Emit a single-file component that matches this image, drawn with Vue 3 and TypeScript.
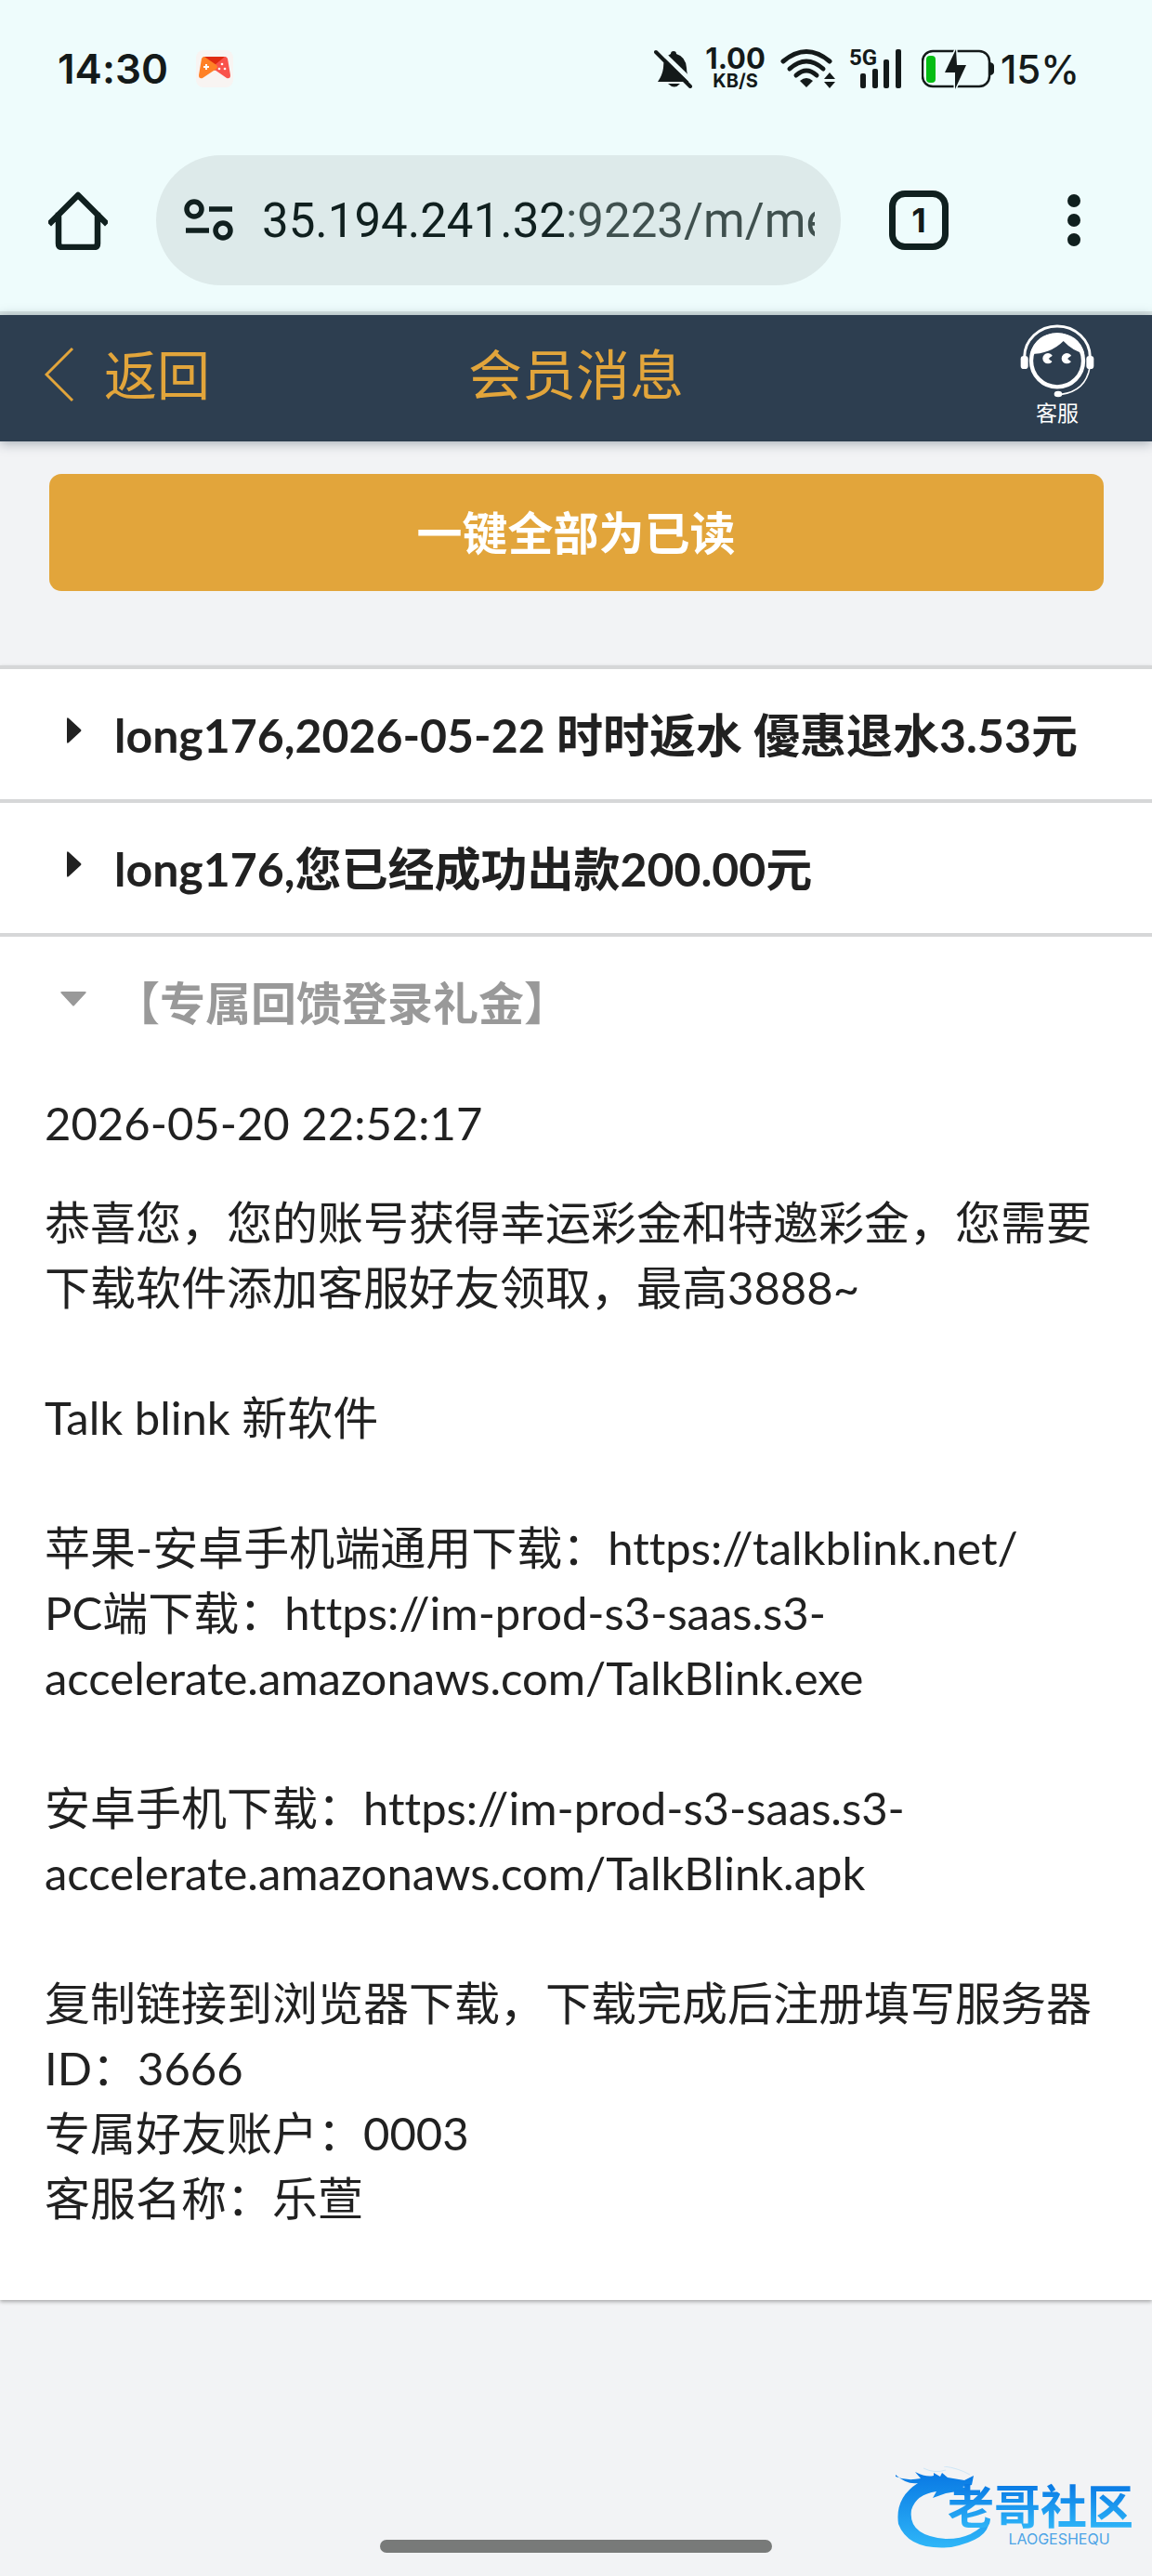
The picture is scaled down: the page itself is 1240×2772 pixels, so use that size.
<script setup lang="ts">
import { ref } from 'vue'

interface Message {
  id: number
  title: string
  read: boolean
  time?: string
  body?: string
}

const address = ref('35.194.241.32:9223/m/me')

const messages = ref<Message[]>([
  { id: 1, title: 'long176,2026-05-22 时时返水 優惠退水3.53元', read: false },
  { id: 2, title: 'long176,您已经成功出款200.00元', read: false },
  {
    id: 3,
    title: '【专属回馈登录礼金】',
    read: true,
    time: '2026-05-20 22:52:17',
    body: [
      '恭喜您，您的账号获得幸运彩金和特邀彩金，您需要下载软件添加客服好友领取，最高3888~',
      '',
      'Talk blink 新软件',
      '',
      '苹果-安卓手机端通用下载：https://talkblink.net/',
      'PC端下载：https://im-prod-s3-saas.s3-accelerate.amazonaws.com/TalkBlink.exe',
      '',
      '安卓手机下载：https://im-prod-s3-saas.s3-accelerate.amazonaws.com/TalkBlink.apk',
      '',
      '复制链接到浏览器下载，下载完成后注册填写服务器ID：3666',
      '专属好友账户：0003',
      '客服名称：乐萱',
    ].join('\n'),
  },
])

const openId = ref<number | null>(3)

function toggle(message: Message) {
  openId.value = openId.value === message.id ? null : message.id
  message.read = true
}

function markAllRead() {
  messages.value.forEach((message) => (message.read = true))
}
</script>

<template>
  <div class="screen">
    <div class="chrome">
      <div class="status">
        <span class="clock">14:30</span>
        <svg class="game" viewBox="0 0 40 40" aria-hidden="true">
          <rect width="40" height="40" rx="8" fill="#f8f4f2" />
          <path d="M7 9q1-2 3-2h20q2 0 3 2L20 22z" fill="#e02a10" />
          <path d="M34 9q-1-2-3-2l-11 9v5l13 9q4 1 4-3z" fill="#f9534c" />
          <path d="M6 9q1-2 3-2l13 9q2 2 0 4L7 30q-4 1-4-3z" fill="#ff8126" />
          <path d="M11 15v6M8 18h6" stroke="#fff" stroke-width="2" />
          <g fill="#fff"><circle cx="28" cy="15" r="1.3" /><circle cx="25" cy="20" r="1.3" /><circle cx="31" cy="20" r="1.3" /></g>
        </svg>
        <div class="indicators">
          <svg class="bell" viewBox="0 0 42 42" aria-hidden="true">
            <path d="M18 5q0-3 3-3t3 3q10 3 11 15 0 8 5 15H4q5-7 6-15 0-12 8-15z" fill="#141a1a" />
            <path d="M15 37h13q-6 7-13 0z" fill="#141a1a" />
            <path d="M4-1L42 36" stroke="#eefcfc" stroke-width="5" />
            <path d="M2 3L39 40" stroke="#141a1a" stroke-width="4" stroke-linecap="round" />
          </svg>
          <div class="speed"><span class="rate">1.00</span><span class="unit">KB/S</span></div>
          <svg class="wifi" viewBox="0 0 60 44" aria-hidden="true">
            <g fill="none" stroke="#141a1a" stroke-width="5" stroke-linecap="round">
              <path d="M4 14Q29-7 54 14" /><path d="M11 22Q29 6 47 22" /><path d="M18 29Q29 19 40 29" />
            </g>
            <path d="M22 35q7-6 14 0l-7 7z" fill="#141a1a" />
            <path d="M48 33l6-7 6 7zM48 36h12l-6 7z" fill="#141a1a" />
          </svg>
          <div class="cell">
            <span class="gen">5G</span>
            <svg class="bars" viewBox="0 0 46 44" aria-hidden="true">
              <g fill="#141a1a">
                <rect y="27" width="6" height="16" rx="2" /><rect x="13" y="22" width="6" height="21" rx="2" />
                <rect x="25" y="12" width="6" height="31" rx="2" /><rect x="38" y="1" width="6" height="42" rx="2" />
              </g>
            </svg>
          </div>
          <svg class="battery" viewBox="0 0 80 44" aria-hidden="true">
            <rect x="1" y="3" width="72" height="38" rx="11" fill="none" stroke="#141a1a" stroke-width="2.500" />
            <path d="M74 15q4 1 4 4v6q0 3-4 4z" fill="#141a1a" />
            <rect x="5" y="8" width="10" height="29" rx="4" fill="#06bd14" />
            <path d="M37 1L25 26h11v18l12-26H38z" fill="#141a1a" stroke="#eefcfc" stroke-width="3" paint-order="stroke" />
          </svg>
          <span class="percent">15%</span>
        </div>
      </div>

      <div class="toolbar">
        <button class="icon-button" type="button" aria-label="主页">
          <svg class="home" viewBox="0 0 64 64" aria-hidden="true">
            <path d="M11 27v30q0 4 4 4h34q4 0 4-4V27M3 34L32 5l29 29" fill="none" stroke="#10201f" stroke-width="6.500" stroke-linejoin="round" stroke-linecap="square" />
          </svg>
        </button>
        <label class="omnibox">
          <svg class="tune" viewBox="0 0 54 46" aria-hidden="true">
            <g fill="none" stroke="#10201f" stroke-width="5.500">
              <circle cx="11" cy="11" r="8" /><circle cx="42" cy="34" r="8" /><path d="M27 11h25M2 34h25" />
            </g>
          </svg>
          <input v-model="address" class="address" type="text" aria-label="网址" />
        </label>
        <button class="tabs" type="button" aria-label="标签页">1</button>
        <button class="icon-button" type="button" aria-label="更多">
          <svg class="more" viewBox="0 0 14 58" aria-hidden="true">
            <g fill="#10201f"><circle cx="7" cy="8" r="7" /><circle cx="7" cy="29" r="7" /><circle cx="7" cy="50" r="7" /></g>
          </svg>
        </button>
      </div>
    </div>

    <header class="header">
      <a class="back" href="#">
        <svg class="chevron" viewBox="0 0 32 60" aria-hidden="true">
          <path d="M30 2L2 30l28 28" fill="none" stroke="#e2a53b" stroke-width="3" />
        </svg>
        返回
      </a>
      <h1 class="title">会员消息</h1>
      <a class="support" href="#">
        <svg class="agent" viewBox="56 30 240 240" aria-hidden="true">
          <g fill="none" stroke="#fff">
            <ellipse cx="176" cy="148" rx="84" ry="84" stroke-width="13" />
            <path d="M70 136a106 100 0 0 1 212 0" stroke-width="9" />
            <path d="M281 170q-14 76-92 86" stroke-width="5" />
          </g>
          <path d="M88 126q18-66 88-68 70 2 88 66-36-6-68-40-42 42-108 42z" fill="#fff" />
          <g fill="#fff">
            <rect x="58" y="132" width="24" height="42" rx="10" /><rect x="270" y="132" width="24" height="42" rx="10" />
            <ellipse cx="179" cy="255" rx="13" ry="10" />
            <circle cx="146" cy="140" r="17" /><circle cx="207" cy="140" r="17" />
          </g>
          <g fill="#2d3e50"><path d="M148 141l16-13v26z" /><circle cx="158" cy="141" r="6" /><path d="M209 141l16-13v26z" /><circle cx="219" cy="141" r="6" /></g>
        </svg>
        <span class="caption">客服</span>
      </a>
    </header>

    <main class="content">
      <button class="mark-all" type="button" @click="markAllRead">一键全部为已读</button>
      <ul class="messages">
        <li v-for="message in messages" :key="message.id" class="message">
          <button class="summary" :class="{ read: message.read }" type="button" :aria-expanded="openId === message.id" @click="toggle(message)">
            <svg class="caret" :class="{ open: openId === message.id }" viewBox="0 0 30 30" aria-hidden="true">
              <path d="M8 3q0-3 2-1l13 12q1 1 0 2L10 28q-2 2-2-1z" fill="currentColor" />
            </svg>
            {{ message.title }}
          </button>
          <div v-if="openId === message.id && message.body" class="detail">
            <time class="time">{{ message.time }}</time>
            <p class="body">{{ message.body }}</p>
          </div>
        </li>
      </ul>
    </main>

    <footer class="footer">
      <div class="watermark">
        <svg class="dragon" viewBox="0 0 110 90" aria-hidden="true">
          <defs>
            <linearGradient id="sea" x1="0" y1="0" x2="0" y2="1">
              <stop offset="0" stop-color="#0878e4" /><stop offset="1" stop-color="#2fb6f8" />
            </linearGradient>
          </defs>
          <path d="M0 11q12 5 27 2L21 6q12 6 20 4l0-3 7 4 2-4 6 5 18 3 10-5-2 10-10 2 8 3-5 7-9-5-12 2-14 5 4-7q-22 3-27 20-4 28 38 31 30 0 45-22 4 22-40 31-46 4-57-25-4-28 21-44-12 2-24-9z" fill="url(#sea)" />
          <path d="M30 2q12 6 24 2M52 0q16 2 28 9" fill="none" stroke="#cfe6f6" stroke-width="1" />
        </svg>
        <div class="wordmark"><span class="brand">老哥社区</span><span class="latin">LAOGESHEQU</span></div>
      </div>
      <div class="home-bar"></div>
    </footer>
  </div>
</template>

<style>
body {
  margin: 0;
  background: #f2f3f5;
}
</style>

<style scoped>
.screen {
  display: flex;
  flex-direction: column;
  min-height: 100vh;
  background: #f2f3f5;
  color: #212121;
  font-family: Lato, "Noto Sans CJK SC", sans-serif;
  font-size: 49px;
  font-variant-ligatures: none;
}

button {
  padding: 0;
  border: 0;
  background: none;
  color: inherit;
  font: inherit;
}

a {
  color: inherit;
  text-decoration: none;
}

svg {
  display: block;
  flex: none;
}

.chrome {
  padding-bottom: 28px;
  border-bottom: 4px solid #d8e4e4;
  background: #eefcfc;
  color: #141a1a;
}

.status {
  display: flex;
  align-items: center;
  height: 148px;
  padding: 0 78px 0 62px;
  font-family: Inter, sans-serif;
}

.clock {
  font-size: 44px;
  font-weight: 600;
}

.game {
  width: 40px;
  height: 40px;
  margin-left: 30px;
}

.indicators {
  display: flex;
  align-items: center;
  margin-left: auto;
}

.bell {
  width: 42px;
  height: 42px;
  margin-right: 13px;
}

.speed {
  display: flex;
  flex-direction: column;
  align-items: center;
  margin-right: 15px;
  font-weight: 700;
}

.rate {
  font-size: 31px;
  line-height: 26px;
}

.unit {
  font-size: 20px;
  line-height: 22px;
}

.wifi {
  width: 60px;
  height: 44px;
  margin-right: 15px;
}

.cell {
  position: relative;
  padding-left: 12px;
  margin-right: 20px;
}

.gen {
  position: absolute;
  top: 0;
  left: 0;
  font-family: Roboto, sans-serif;
  font-size: 24px;
  font-weight: 700;
  line-height: 20px;
}

.bars {
  width: 46px;
  height: 44px;
}

.battery {
  width: 80px;
  height: 44px;
  margin-right: 5px;
}

.percent {
  font-size: 42px;
  font-weight: 500;
}

.toolbar {
  display: flex;
  align-items: center;
  padding: 19px 77px 0 52px;
}

.home {
  width: 64px;
  height: 64px;
}

.omnibox {
  display: flex;
  flex: 1;
  align-items: center;
  gap: 30px;
  min-width: 0;
  height: 140px;
  margin: 0 52px;
  padding: 0 28px 0 30px;
  border-radius: 70px;
  background: #ddeaea;
}

.tune {
  width: 54px;
  height: 46px;
}

.address {
  flex: 1;
  min-width: 0;
  height: 80px;
  padding: 0;
  border: 0;
  outline: 0;
  background: linear-gradient(to right, #10201f 328px, #3f504e 328px);
  background-clip: text;
  color: transparent;
  font-family: Roboto, sans-serif;
  font-size: 51px;
}

.tabs {
  box-sizing: border-box;
  width: 64px;
  height: 64px;
  margin-right: 128px;
  border: 7px solid #10201f;
  border-radius: 17px;
  font-family: Inter, sans-serif;
  font-size: 36px;
  font-weight: 700;
  line-height: 50px;
}

.more {
  width: 14px;
  height: 58px;
}

.header {
  position: relative;
  display: grid;
  grid-template-columns: 1fr auto 1fr;
  align-items: center;
  height: 136px;
  padding: 0 48px;
  background: #2d3e50;
  box-shadow: 0 2px 12px rgba(45, 62, 80, 0.4);
  color: #e2a53b;
  font-size: 57px;
  line-height: 76px;
}

.back {
  display: flex;
  align-items: center;
  gap: 32px;
  padding-bottom: 8px;
}

.chevron {
  width: 32px;
  height: 60px;
}

.title {
  margin: 0;
  padding-bottom: 8px;
  font-size: 58px;
  font-weight: 400;
}

.support {
  display: flex;
  flex-direction: column;
  align-items: center;
  justify-self: end;
  margin-right: 14px;
  padding-bottom: 6px;
  color: #fff;
}

.agent {
  width: 80px;
  height: 80px;
}

.caption {
  font-size: 23px;
  line-height: 30px;
}

.content {
  padding-top: 35px;
}

.mark-all {
  display: block;
  width: calc(100% - 105px);
  height: 126px;
  margin: 0 auto 80px;
  padding-bottom: 6px;
  border-radius: 13px;
  background: #e2a53b;
  color: #fff;
  font-weight: 700;
}

.messages {
  margin: 0;
  padding: 0;
  list-style: none;
  background: #fff;
  box-shadow: 0 2px 4px rgba(0, 0, 0, 0.3);
}

.message {
  border-top: 4px solid #d6d7d8;
}

.summary {
  display: flex;
  align-items: center;
  gap: 29px;
  width: 100%;
  height: 140px;
  padding: 0 48px 4px 64px;
  font-size: 50px;
  font-weight: 700;
  text-align: left;
  white-space: nowrap;
}

.summary.read {
  color: #999;
  font-size: 49px;
}

.caret {
  width: 30px;
  height: 30px;
  margin-bottom: 4px;
}

.caret.open {
  transform: rotate(90deg);
}

.detail {
  padding: 25px 48px 75px;
  line-height: 70px;
}

.time {
  display: block;
  margin-bottom: 37px;
}

.body {
  margin: 0;
  white-space: pre-line;
}

.footer {
  position: relative;
  display: flex;
  flex: 1;
  align-items: flex-end;
  justify-content: center;
  padding-bottom: 25px;
}

.home-bar {
  width: 34%;
  height: 14px;
  border-radius: 7px;
  background: #787a79;
}

.watermark {
  position: absolute;
  right: 20px;
  bottom: 28px;
  display: flex;
}

.dragon {
  width: 110px;
  height: 90px;
  margin-right: -54px;
}

.wordmark {
  display: flex;
  flex-direction: column;
  align-items: center;
  padding-top: 18px;
}

.brand {
  background: linear-gradient(#0878e4, #2fb6f8);
  background-clip: text;
  color: transparent;
  font-size: 50px;
  font-weight: 700;
  line-height: 50px;
}

.latin {
  margin-left: 40px;
  color: #4da4e6;
  font-family: Inter, sans-serif;
  font-size: 16px;
  line-height: 20px;
}
</style>
